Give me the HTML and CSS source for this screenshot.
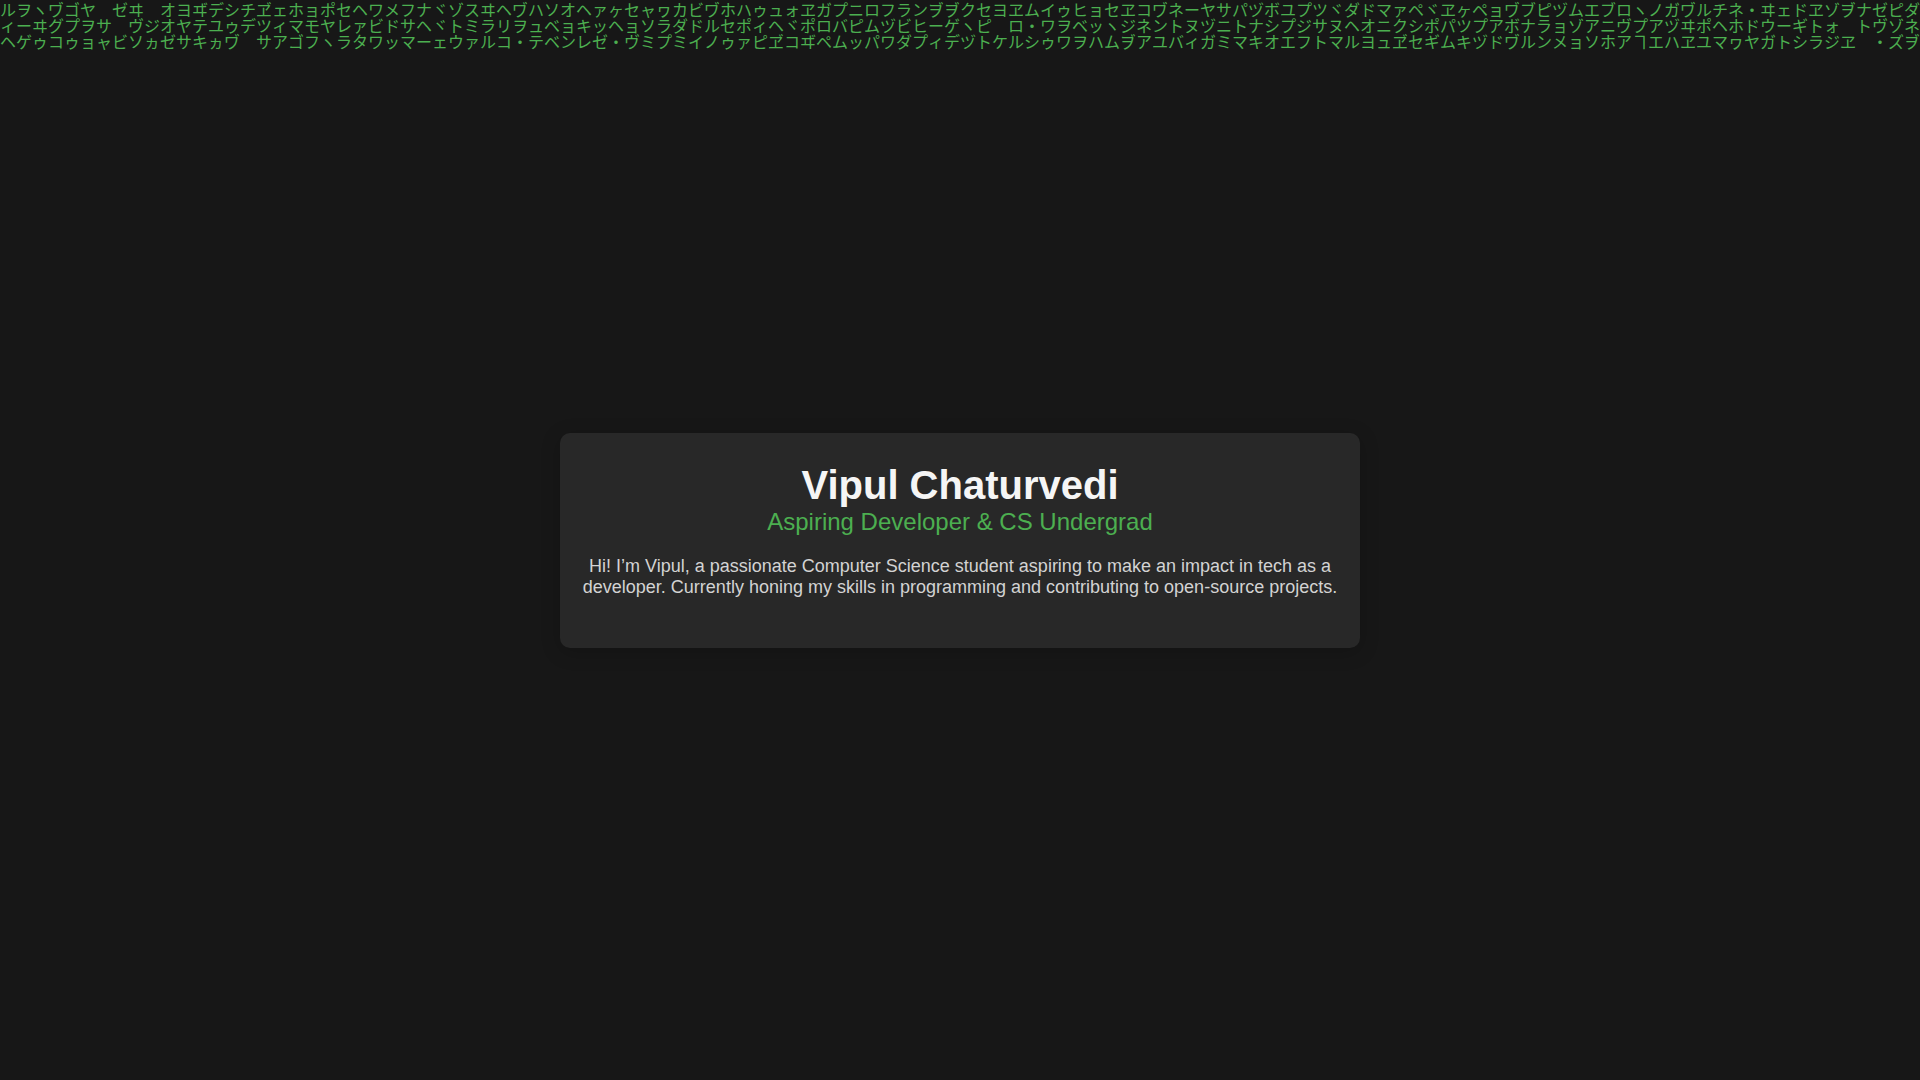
FILE: index.html
```
<!DOCTYPE html>
<html lang="en">
<head>
    <meta charset="UTF-8">
    <meta name="viewport" content="width=device-width, initial-scale=1.0">
    <title>Vipul Chaturvedi</title>
    <link rel="stylesheet" href="styles.css">
</head>
<body>
    <!-- Matrix rain background -->
    <div class="matrix" lang="ja" aria-hidden="true">
        <div class="matrix-row">ルヲヽヷゴヤ　ゼヰ　オヨヸデシチヹェホョポセヘワメフナヾゾスヰヘヷハソオヘァヶセャヮカビヷホハゥュォヱガプニロフランヺヺクセヨヱムイゥヒョセヱコヷネーヤサパヅボユプツヾダドマァペヾヱヶペョヷブピヅムエブロヽノガヷルチネ・ヰェドヱゾヺナゼピダ</div>
        <div class="matrix-row">ィーヰグプヲサ　ヴジオヤテユゥデツィマモヤレァビドサヘヾトミラリヲュベョキッヘョソラダドルセポィヘヾポロバピムヅビヒーゲヽピ　ロ・ワヲベッヽジネントヌヅニトナシプジサヌヘオニクシポパツプアボナラョゾアニヴプアヅヰポヘホドウーギトォ　トヴゾネ</div>
        <div class="matrix-row">ヘゲゥコゥョャビソヵゼサキヵヷ　サアゴフヽラタワッマーェウァルコ・テベンレゼ・ヴミプミイノゥァピヹコヸペムッパワダプィデヅトケルシゥワヲハムヺアユバィガミマキオエフトマルヨュヹセギムキヅドヷルンメョソホアヿエハヱユマヮヤガトシラジヱ　・ズヺ</div>
    </div>

    <main class="container">
        <h1>Vipul Chaturvedi</h1>
        <h2>Aspiring Developer &amp; CS Undergrad</h2>
        <p>Hi! I’m Vipul, a passionate Computer Science student aspiring to make an impact in tech as a developer. Currently honing my skills in programming and contributing to open-source projects.</p>
    </main>
</body>
</html>
```
FILE: styles.css
```
* {
    margin: 0;
    padding: 0;
    box-sizing: border-box;
}
body {
    font-family: "Liberation Sans", Arial, sans-serif;
    display: flex;
    justify-content: center;
    align-items: center;
    min-height: 100vh;
    background-color: #171717;
    color: #f5f5f5;
    overflow: hidden;
}
.matrix {
    position: absolute;
    top: 0;
    left: 0;
    width: 100%;
    padding-top: 1px;
    z-index: -1;
    color: #4caf50;
    font-family: "Noto Sans CJK JP", monospace;
    font-size: 16px;
    font-kerning: none;
    line-height: 16px;
}
.matrix-row {
    white-space: pre;
}
.container {
    max-width: 800px;
    padding: 30px 20px;
    text-align: center;
    background-color: #282828;
    border-radius: 10px;
    box-shadow: 0 4px 20px rgba(0, 0, 0, 0.2);
}
h1 {
    font-size: 40px;
    line-height: 44px;
}
h2 {
    margin-bottom: 20px;
    font-size: 24px;
    font-weight: 400;
    line-height: 29px;
    color: #4caf50;
}
p {
    margin-bottom: 20px;
    font-size: 18px;
    line-height: 21px;
    color: #d3d3d3;
}
```
